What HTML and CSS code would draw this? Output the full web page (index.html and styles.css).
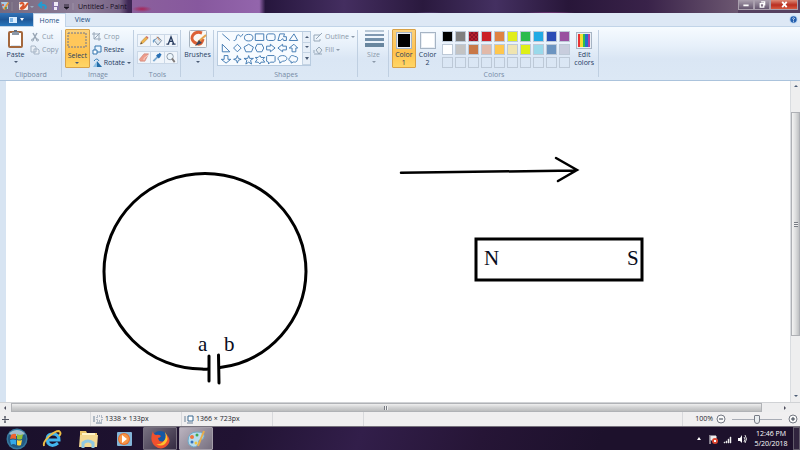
FILE: index.html
```html
<!DOCTYPE html>
<html lang="en">
<head>
<meta charset="utf-8">
<title>Untitled - Paint</title>
<link rel="stylesheet" href="styles.css">
</head>
<body>
<header class="titlebar">
  <svg class="quick" viewBox="0 0 76 13" aria-hidden="true">
    <path d="M1 2h7v7H3z" fill="#a5c9e4"/><path d="M3 9L8 2l1 1-4 7z" fill="#e99837"/><circle cx="3" cy="5" r="1" fill="#d44b33"/><circle cx="6" cy="8" r="1" fill="#4d8e48"/>
    <path d="M12 2v9" stroke="#8b8292"/>
    <rect x="19" y="2" width="9" height="8" rx="1" fill="#f3eee8"/><path d="M20 4c3-3 5 1 2 3s0 3 3 0l3-4" fill="none" stroke="#d9562b" stroke-width="2"/>
    <path d="M30 6h4l-2 2z" fill="#99a9be"/>
    <path d="M39 5h5q3 1 1 4M42 2l-3 3 3 3" fill="none" stroke="#249bd0" stroke-width="2"/>
    <path d="M52 2h7v8h-7z" fill="#8370a4"/><path d="M54 2h4v4h-4zM54 7h3v3h-3z" fill="#eee9f6"/>
    <path d="M64 5h5M64 7h5l-2.500 2z" stroke="#18131e" stroke-width=".8" fill="#18131e"/><path d="M73 3v7" stroke="#9d92a6"/>
  </svg>
  <h1>Untitled - Paint</h1>
  <div class="glass" aria-hidden="true"></div>
  <div class="window-controls">
    <button aria-label="Minimize"><svg viewBox="0 0 16 10"><path d="M5 6h6" stroke="#fff" stroke-width="2"/></svg></button>
    <button aria-label="Restore"><svg viewBox="0 0 16 10"><path d="M6 4h4v4H6zM7 2h4v4" fill="none" stroke="#fff" stroke-width="1.500"/></svg></button>
    <button class="close" aria-label="Close"><svg viewBox="0 0 16 10"><path d="M6 2l5 6M11 2L6 8" stroke="#fff" stroke-width="2"/></svg></button>
  </div>
</header>
<nav class="tabs">
  <button class="file" aria-label="File menu"><svg viewBox="0 0 33 13"><rect x="9" y="4" width="8" height="6" fill="#d9edff"/><path d="M10 5h3v4h-3z" fill="#7eb5e5"/><path d="M20 5h4l-2 3z" fill="#fff"/></svg></button>
  <button class="tab active">Home</button>
  <button class="tab">View</button>
  <button class="help" aria-label="Help"><svg viewBox="0 0 10 10"><circle cx="5" cy="5" r="4.500" fill="#b9d5f2"/><circle cx="5" cy="5" r="3.500" fill="#245fae"/><path d="M4 4q1-2 2 0L5 5v1M5 7v1" fill="none" stroke="#fff"/></svg></button>
</nav>
<section class="ribbon" aria-label="Ribbon">
  <div class="group clipboard">
    <div class="tools">
      <button class="big">
        <svg viewBox="0 0 18 20"><rect x="2" y="3" width="13" height="15" rx="1" fill="#fff" stroke="#a4683d" stroke-width="2"/><path d="M5 3h7v3H5z" fill="#8c98a7"/><path d="M7 1h3v2H7z" fill="#626f82"/><path d="M4 16h9v1H4z" fill="#d9e4ef"/></svg>
        Paste<i class="drop"></i></button>
      <div class="stack">
        <button class="off"><svg viewBox="0 0 10 10"><path d="M3 1l4 7M7 1L3 8" stroke="#98a6b5" stroke-width="1.500"/><circle cx="2.500" cy="8" r="1" fill="none" stroke="#98a6b5"/><circle cx="7.500" cy="8" r="1" fill="none" stroke="#98a6b5"/></svg>Cut</button>
        <button class="off"><svg viewBox="0 0 10 10"><path d="M1 1h4l1 1v5H1zM4 4h4l1 1v4H4z" fill="#eaf0f7" stroke="#a5b4c5"/></svg>Copy</button>
      </div>
    </div>
    <h2>Clipboard</h2>
  </div>
  <div class="group image">
    <div class="tools">
      <button class="big selected">
        <svg class="wide" viewBox="0 0 20 20"><rect x="1" y="3" width="18" height="14" fill="#ffc75a" stroke="#6c7590" stroke-dasharray="2 1"/></svg>
        Select<i class="drop"></i></button>
      <div class="stack">
        <button class="off"><svg viewBox="0 0 10 10"><path d="M2 0v7h7M0 2h7v7M2 7l6-6" fill="none" stroke="#98a7b8"/></svg>Crop</button>
        <button><svg viewBox="0 0 10 10"><path d="M3 1h6v6H3z" fill="#e7f4ff" stroke="#3375ae"/><path d="M1 5h4v4H1z" fill="#fff" stroke="#3375ae"/></svg>Resize</button>
        <button><svg viewBox="0 0 10 10"><path d="M1 9h4V3z" fill="#8dbee3"/><path d="M5 3l5 6H5z" fill="#246da8"/><path d="M2 3q3-4 5 0" fill="none" stroke="#3980b9"/></svg>Rotate<i class="drop"></i></button>
      </div>
    </div>
    <h2>Image</h2>
  </div>
  <div class="group toolset">
    <div class="toolgrid">
      <button aria-label="Pencil"><svg viewBox="0 0 12 12"><path d="M2 10l1-3 5-5 2 2-5 5z" fill="#eeb44d" stroke="#ab7c3d" stroke-width=".5"/><path d="M2 10l1-2 1 1z" fill="#333"/><path d="M8 2l2 2 1-1-2-2z" fill="#d36a60"/></svg></button>
      <button aria-label="Fill with color"><svg viewBox="0 0 12 12"><path d="M3 6l4-4 4 4-4 5z" fill="#dfe9f1" stroke="#73899f"/><path d="M4 4Q0 5 2 9l2-4z" fill="#6b9fcb"/><path d="M6 2l3 4" stroke="#d47945"/></svg></button>
      <button aria-label="Text"><svg viewBox="0 0 12 12"><path d="M1 10h3M7 10h4M3 10l3-8 3 8M4 7h4" fill="none" stroke="#293d60" stroke-width="1.500"/></svg></button>
      <button aria-label="Eraser"><svg viewBox="0 0 12 12"><path d="M1 8l5-6h5L7 10H2z" fill="#ed9c8b" stroke="#c77c70" stroke-width=".6"/><path d="M6 9V7l5-4" fill="none" stroke="#fff" stroke-width=".6"/></svg></button>
      <button aria-label="Color picker"><svg viewBox="0 0 12 12"><path d="M2 10l5-5" stroke="#7caad1" stroke-width="2"/><path d="M6 3l3 3M8 4l2-2" stroke="#286fb4" stroke-width="3"/></svg></button>
      <button aria-label="Magnifier"><svg viewBox="0 0 12 12"><circle cx="5" cy="5" r="3.500" fill="#edf6fc" stroke="#8795a5"/><path d="M7 7l3 4" stroke="#807b7a" stroke-width="2"/></svg></button>
    </div>
    <h2>Tools</h2>
  </div>
  <div class="group brushes">
    <div class="tools"><button class="big">
      <svg viewBox="0 0 18 20"><rect x=".5" y="1.500" width="17" height="17" rx="1" fill="#faf9f5" stroke="#a6b2be"/><path d="M13 4C5 1 0 9 5 13s8 2 9-3" fill="none" stroke="#dc6135" stroke-width="3"/><path d="M9 13l8-7" stroke="#e5a24d" stroke-width="2"/><path d="M6 17l4-6 3 3z" fill="#3c465b"/></svg>
      Brushes<i class="drop"></i></button></div>
  </div>
  <div class="group shapes">
    <div class="tools">
      <div class="gallery">
        <svg class="shape-set" viewBox="0 0 84 35" role="img" aria-label="Shapes">
          <g fill="#f7fbff" stroke="#4179b1" stroke-width="1">
            <path d="M2 2l8 7" /><path d="M14 9c4 1 2-6 5-6s1 5 5-1" fill="none"/><ellipse cx="30" cy="6" rx="4.500" ry="3.500"/><path d="M37 2h9v7h-9z"/><rect x="49" y="2" width="9" height="7" rx="2"/><path d="M61 9l2-7h5l-1 3h3v4h-3l-1-2-2 2z"/><path d="M78 2l4 7h-9z"/>
            <path d="M2 13v8h8z"/><path d="M18 13l4 4-4 4-4-4z"/><path d="M30 13l5 3-2 5h-6l-2-5z"/><path d="M39 13h5l2 4-2 4h-5l-2-4z"/><path d="M49 15h4v-2l5 4-5 4v-2h-4z"/><path d="M70 15h-4v-2l-5 4 5 4v-2h4z"/><path d="M76 21v-4h-3l5-4 4 4h-2v4z"/>
            <path d="M4 25h4v4h3l-5 4-5-4h3z"/><path d="M18 25l1 3 3 1-3 1-1 3-1-3-3-1 3-1z"/><path d="M30 25l1 3h4l-3 2 1 4-3-2-3 2 1-4-3-2h4z"/><path d="M42 25l1 2h4l-2 2 2 3h-4l-1 2-2-2h-3l2-3-2-2h3z"/><path d="M50 25h7l1 1v5l-1 1h-4l-2 2v-2l-2-1v-5z"/><path d="M63 31c-4-3-1-6 3-6 6 0 6 6 0 6l-3 2z"/><path d="M75 31c-3 0-3-3-1-4 0-3 4-2 5-1 4 0 3 3 2 5-2 2-3 0-4 1l-2 1z"/>
          </g>
        </svg>
        <div class="gallery-arrows"><button aria-label="Previous shapes"><i class="up"></i></button><button aria-label="Next shapes"><i class="drop"></i></button><button aria-label="More shapes"><i class="drop more"></i></button></div>
      </div>
      <div class="stack">
        <button class="off"><svg viewBox="0 0 10 10"><path d="M1 3h6M1 3v6h6V7M3 7l6-6" fill="none" stroke="#96a7b8"/></svg>Outline<i class="drop"></i></button>
        <button class="off"><svg viewBox="0 0 10 10"><path d="M3 5l3-3 3 3-3 4z" fill="#e2e9ef" stroke="#96a7b8"/><path d="M1 9h8M1 5v3" stroke="#96a7b8"/></svg>Fill<i class="drop"></i></button>
      </div>
    </div>
    <h2>Shapes</h2>
  </div>
  <div class="group size">
    <div class="tools"><button class="big off"><svg class="wide" viewBox="0 0 20 20"><path d="M1 2h19" stroke="#7f98b1"/><path d="M1 6h19" stroke="#7f98b1" stroke-width="2"/><path d="M1 10.500h19" stroke="#7390aa" stroke-width="3"/><path d="M1 16h19" stroke="#68869f" stroke-width="4"/></svg>Size<i class="drop"></i></button></div>
  </div>
  <div class="group colors">
    <div class="tools">
      <button class="big color selected"><span class="chip black"></span><span>Color<br>1</span></button>
      <button class="big color"><span class="chip"></span><span>Color<br>2</span></button>
      <div class="palette">
        <button class="black" aria-label="Black"></button><button class="gray" aria-label="Gray"></button><button class="darkred" aria-label="Dark red"></button><button class="red" aria-label="Red"></button><button class="orange" aria-label="Orange"></button><button class="yellow" aria-label="Yellow"></button><button class="green" aria-label="Green"></button><button class="turquoise" aria-label="Turquoise"></button><button class="indigo" aria-label="Indigo"></button><button class="purple" aria-label="Purple"></button>
        <button class="white" aria-label="White"></button><button class="lightgray" aria-label="Light gray"></button><button class="brown" aria-label="Brown"></button><button class="rose" aria-label="Rose"></button><button class="gold" aria-label="Gold"></button><button class="cream" aria-label="Light yellow"></button><button class="lime" aria-label="Lime"></button><button class="aqua" aria-label="Light turquoise"></button><button class="bluegray" aria-label="Blue gray"></button><button class="lavender" aria-label="Lavender"></button>
        <button aria-label="Custom 1"></button><button aria-label="Custom 2"></button><button aria-label="Custom 3"></button><button aria-label="Custom 4"></button><button aria-label="Custom 5"></button><button aria-label="Custom 6"></button><button aria-label="Custom 7"></button><button aria-label="Custom 8"></button><button aria-label="Custom 9"></button><button aria-label="Custom 10"></button>
      </div>
      <button class="big color edit"><span class="chip rainbow"></span><span>Edit<br>colors</span></button>
    </div>
    <h2>Colors</h2>
  </div>
</section>
<main class="workspace">
  <svg class="drawing" viewBox="6 81 784 321" preserveAspectRatio="xMinYMin meet" role="img" aria-label="Coil with terminals a and b, bar magnet and arrow">
    <g fill="none" stroke="#000" stroke-width="3" stroke-linecap="round">
      <path d="M208 369Q205 369.500 202 369A98 97.500 0 0 1 104 271.500A101 98 0 0 1 306 271.500A98 98 0 0 1 220 367.500"/>
      <path d="M209 356v25M218.500 355l.5 28"/>
      <path d="M401 172.800L576 170.500M556 158l21 12-19 11" stroke-width="2.500"/>
      <path d="M476 239h166v41H476z" stroke-linecap="butt"/>
    </g>
    <g class="marks"><text x="198" y="351">a</text><text x="224" y="351">b</text><text x="484" y="265">N</text><text x="627" y="265">S</text></g>
  </svg>
  <div class="vscroll" aria-hidden="true"><i class="up"></i><div class="thumb"></div><i class="drop"></i></div>
</main>
<div class="hscroll" aria-hidden="true"><i class="left"></i><div class="thumb"></div><i class="right"></i></div>
<footer class="status">
  <div class="cell cursor"><svg viewBox="0 0 10 10"><path d="M5 2v7M2 5.500h7" stroke="#515461"/><path d="M4 3h2M4 8h2M3 5v1M8 5v1" stroke="#515461"/></svg></div>
  <div class="cell"><svg viewBox="0 0 10 10"><path d="M4 2h5v5H4z" fill="none" stroke="#70839b" stroke-dasharray="1 1"/><path d="M1 2v6M3 9h6" stroke="#6f8297"/></svg>1338 × 133px</div>
  <div class="cell"><svg viewBox="0 0 10 10"><path d="M4 2h5v5H4z" fill="#fff" stroke="#386991"/><path d="M1 2v6M3 9h6" stroke="#6f8297"/></svg>1366 × 723px</div>
  <div class="cell"></div>
  <div class="cell rest"></div>
  <div class="zoom">
    <label for="zoom">100%</label>
    <button aria-label="Zoom out"><svg viewBox="0 0 10 10"><circle cx="5" cy="5" r="4" fill="#fafafa" stroke="#747983"/><path d="M3 5h4" stroke="#343e4c"/></svg></button>
    <input id="zoom" type="range" min="0" max="100" value="50">
    <button aria-label="Zoom in"><svg viewBox="0 0 10 10"><circle cx="5" cy="5" r="4" fill="#fafafa" stroke="#747983"/><path d="M3 5h4M5 3v4" stroke="#343e4c"/></svg></button>
  </div>
</footer>
<nav class="taskbar">
  <button aria-label="Start"><svg viewBox="0 0 22 22"><circle cx="11" cy="11" r="10.500" fill="#37779d"/><circle cx="11" cy="11" r="9" fill="#235a83"/><path d="M3 6a10 10 0 0 1 16 0q-8 4-16 0" fill="#9fbdcd"/><path d="M5 7q3-2 5-1v5q-3-1-6 0z" fill="#ee632e"/><path d="M11 6q3 2 6 0l-1 5q-3 1-5 0z" fill="#91bf38"/><path d="M4 12q3-1 6 0v5q-3-2-5 0z" fill="#35a9e8"/><path d="M11 12q2 1 5 0l-1 5q-2 1-4 0z" fill="#ffd43b"/></svg></button>
  <button aria-label="Internet Explorer"><svg viewBox="0 0 22 22"><path d="M17 15q-6 5-10 0-3-9 5-9 6 0 6 6H8" fill="none" stroke="#43b6ee" stroke-width="3"/><path d="M3 18C1 13 13 3 18 3q3 2 0 5" fill="none" stroke="#edbd45" stroke-width="2"/></svg></button>
  <button aria-label="File Explorer"><svg viewBox="0 0 22 22"><path d="M3 3h6l1 2h10v14H3z" fill="#eac468"/><path d="M5 5h13v12H5z" fill="#fff4c7"/><path d="M3 7h18l-1 12H2z" fill="#f4d992"/><path d="M6 20v-5q5-4 10 0v5" fill="none" stroke="#8fc9e3" stroke-width="3"/></svg></button>
  <button aria-label="Media Player"><svg viewBox="0 0 22 22"><rect x="4" y="4" width="15" height="14" rx="1" fill="#84b5d8"/><circle cx="11" cy="11" r="6" fill="#e66b28"/><circle cx="11" cy="11" r="5" fill="#f79547"/><path d="M9 7l5 4-5 4z" fill="#fff"/></svg></button>
  <button class="running" aria-label="Firefox"><svg viewBox="0 0 22 22"><circle cx="11" cy="11" r="8" fill="#1658a3"/><path d="M4 3q0 3 3 4 3-1 5 1-1 2-3 2 1 5 6 3 4-3 1-8 6 5 4 10-4 7-11 5Q-1 15 4 3z" fill="#ef512e"/><path d="M16 4q5 7 0 12-4 3-9 0 4 1 7-2 4-4 2-10z" fill="#ffc12d"/></svg></button>
  <button class="running current" aria-label="Paint"><svg viewBox="0 0 22 22"><path d="M3 13Q3 4 12 4q8 0 7 5-1 3-4 3-2 0-1 3-3 6-8 3-3-1-3-5z" fill="#b7dced" stroke="#6eaac9"/><circle cx="7" cy="9" r="2" fill="#ee733c"/><circle cx="12" cy="7" r="1.500" fill="#40a951"/><circle cx="7" cy="14" r="1.500" fill="#3672bb"/><circle cx="11" cy="15" r="1.500" fill="#f0c43e"/><path d="M13 18L19 3" stroke="#e8ad4c" stroke-width="2"/></svg></button>
  <div class="tray">
    <svg class="tray-icons" viewBox="0 0 54 12" aria-hidden="true"><path d="M2 7l2-3 2 3z" fill="#fff"/><path d="M15 2v9M16 3h5v4h-5z" stroke="#eee" fill="#eee"/><circle cx="20" cy="8" r="3" fill="#dc4530"/><path d="M19 7l2 2M21 7l-2 2" stroke="#fff"/><path d="M29 9h1v1h-1zM31 8h1v2h-1zM33 6h1v4h-1zM35 4h1v6h-1z" fill="#fff" stroke="#ddd" stroke-width=".5"/><path d="M43 5h2l2-3v8l-2-2h-2z" fill="#fff"/><path d="M49 4q2 2 0 5M50 2q3 4 0 8" fill="none" stroke="#ddd"/></svg>
    <time datetime="2018-05-20T12:46">12:46 PM<br>5/20/2018</time>
    <button class="desktop" aria-label="Show desktop"></button>
  </div>
</nav>
</body>
</html>
```
FILE: styles.css
```css
* { box-sizing: border-box; }
body {
  margin: 0;
  height: 100vh;
  overflow: hidden;
  display: grid;
  grid-template-columns: minmax(0, 1fr);
  grid-template-rows: auto auto auto minmax(0, 1fr) auto auto auto;
  font: 7px/8px "Open Sans", "Noto Sans", sans-serif;
  color: #263c5f;
}
button {
  border: 0;
  padding: 0;
  margin: 0;
  background: none;
  font: inherit;
  color: inherit;
}
svg { display: block; flex: none; }
h1, h2 { margin: 0; font: inherit; }

/* arrows */
.drop, .up, .left, .right { display: block; width: 0; height: 0; border: 2px solid transparent; flex: none; }
.drop { border-top-color: #4b5b74; border-bottom: 0; }
.up { border-bottom-color: #4b5b74; border-top: 0; }
.left { border-right-color: #4b4b5a; border-left: 0; }
.right { border-left-color: #4b4b5a; border-right: 0; }

/* title bar */
.titlebar {
  height: 13px;
  display: flex;
  background: linear-gradient(90deg, #75697f, #8d7d98 10%, #776386 15%, #3f2855 16%, #3a2250 17%);
}
.quick { width: 76px; height: 13px; }
.titlebar h1 { color: #150d1d; line-height: 13px; padding-left: 2px; width: 56px; white-space: nowrap; }
.glass {
  flex: 1;
  background:
    radial-gradient(ellipse at 49% 100%, #705999 0, transparent 4%),
    radial-gradient(ellipse at 69% 100%, #a04c9b 0, transparent 5%),
    radial-gradient(ellipse 10px 3px at 10px 9px, #a82456, transparent),
    linear-gradient(90deg, #8b609c, #87589e 11%, #9365ac 21%, #26163d 22%, #442e60 35%, #2a193e 48%, #443061 60%, #281639 72%, #392249 85%, #6c5771);
}
.window-controls { display: flex; align-items: flex-start; padding-right: 2px; background: #55405f; }
.window-controls button { width: 16px; height: 10px; border: 1px solid #aaa0ae; border-top: 0; background: linear-gradient(#aaa0ae, #65566f); }
.window-controls .close { width: 28px; background: linear-gradient(#dc8b78, #b92e20 55%, #d55a40); }
.window-controls svg { width: 100%; height: 9px; }

/* ribbon tabs */
.tabs { height: 14px; display: flex; background: #dde8f5; border-bottom: 1px solid #c1d4e8; }
.tabs button { height: 13px; }
.file { width: 33px; background: linear-gradient(#3475b9, #1e5797 50%, #2877bd); }
.file svg { width: 33px; height: 13px; }
.tab { width: 33px; color: #234d7f; }
.tab.active { background: #f8fbff; border: 1px solid #c1d4e8; border-bottom: 0; margin-bottom: -1px; align-self: flex-start; }
.tabs .active { height: 14px; }
.help { margin-left: auto; padding: 2px; }
.help svg { width: 9px; height: 9px; }

/* ribbon */
.ribbon {
  height: 54px;
  display: flex;
  background: linear-gradient(#f6fbff, #e7f0fa 35%, #dae6f4 60%, #dce8f5);
  border-bottom: 1px solid #abc3dc;
}
.group { display: flex; flex-direction: column; justify-content: space-between; padding: 2px 3px 1px; position: relative; flex: none; }
.group::after { content: ""; position: absolute; right: 0; top: 3px; bottom: 3px; width: 1px; background: #bfcfe1; }
.group h2 { color: #778ba5; text-align: center; line-height: 9px; }
.tools { display: flex; gap: 2px; }
.clipboard { width: 62px; }
.image { width: 72px; }
.toolset { width: 47px; }
.brushes { width: 33px; }
.shapes { width: 144px; }
.size { width: 31px; }
.colors { width: 210px; }
.big { width: 25px; height: 39px; display: flex; flex-direction: column; align-items: center; gap: 2px; }
.big svg { width: 18px; height: 20px; }
.big svg.wide { width: 20px; }
.big.selected { background: linear-gradient(#fbd17a, #ffc24d 60%, #ffd666); border: 1px solid #d8a147; border-radius: 1px; }
.brushes .tools, .size .tools { justify-content: center; }
.off { color: #8b99aa; }
.off .drop { border-top-color: #8b99aa; }
.stack { display: flex; flex-direction: column; gap: 3px; padding-top: 3px; }
.stack button { height: 10px; display: flex; align-items: center; gap: 2px; white-space: nowrap; }
.stack svg { width: 10px; height: 10px; }
.toolgrid { display: grid; grid-template-columns: repeat(3, 1fr); row-gap: 4px; padding-top: 5px; }
.toolgrid button { height: 13px; border: 1px solid #cbd8e7; border-left-width: 0; background: #f0f5fb; display: grid; place-items: center; }
.toolgrid button:nth-child(3n + 1) { border-left-width: 1px; }
.toolgrid svg { width: 12px; height: 11px; }
.gallery { display: flex; height: 35px; margin-top: 2px; border: 1px solid #b8cbdf; background: #f7fbff; }
.shape-set { width: 84px; height: 33px; }
.gallery-arrows { width: 8px; display: grid; border-left: 1px solid #c4d3e3; background: #e7eff8; }
.gallery-arrows button { display: grid; place-items: center; border-bottom: 1px solid #c4d3e3; }
.gallery-arrows .more { border-top-width: 3px; }
.shapes .tools { gap: 2px; }
.colors .tools { gap: 0; }
.color { gap: 2px; padding-top: 3px; }
.color.selected { padding-top: 2px; }
.chip { width: 16px; height: 17px; flex: none; border: 1px solid #a6b4c4; outline: 1px solid #e9eef4; outline-offset: -2px; background: #fff; }
.chip.rainbow { background: linear-gradient(90deg, #e83333 20%, #f5df32 20% 40%, #2ebd53 40% 60%, #256ecf 60% 80%, #b83e9f 80%); }
.black, .chip.black { background: #000; }
.palette { display: grid; grid-template-columns: repeat(10, 11px); grid-auto-rows: 11px; gap: 2px; padding: 2px 2px 0 3px; }
.palette button { border: 1px solid #bdc9d7; }
.gray { background: #7f7f7f; }
.darkred { background: repeating-conic-gradient(#8e1227 0 25%, #b3202d 0 50%) 0 0 / 4px 4px; }
.red { background: #cb2128; }
.orange { background: #df8343; }
.yellow { background: #e1ed19; }
.green { background: #2cbb4c; }
.turquoise { background: #21aae4; }
.indigo { background: #2b4db5; }
.purple { background: #9951a0; }
.white { background: #fff; }
.lightgray { background: #c3c3c3; }
.brown { background: #c87848; }
.rose { background: #e2b9a9; }
.gold { background: #ffc74e; }
.cream { background: #efe4b0; }
.lime { background: #deef18; }
.aqua { background: #99d9ea; }
.bluegray { background: #6b94c0; }
.lavender { background: #c8cddd; }

/* canvas */
.workspace { display: flex; min-height: 0; background: #fff; border-left: 6px solid #d7e4f2; }
.drawing { flex: 1; min-width: 0; height: 100%; }
.marks { font: 21px "Liberation Serif", serif; fill: #080c20; }
.vscroll { width: 10px; padding: 4px 0; display: grid; grid-template-rows: 3px minmax(0, 1fr) 3px; justify-items: center; background: #eeeeef; border-left: 1px solid #d9dce0; }
.vscroll .thumb { width: 9px; height: 73%; margin-top: 24px; border: 1px solid #aeb0b5; background: linear-gradient(90deg, #f3f3f3, #dddedf 50%, #bfc1c3); display: grid; place-items: center; }
.vscroll .thumb::after, .hscroll .thumb::after { content: ""; width: 4px; height: 5px; background: repeating-linear-gradient(#777b83 0 1px, #eee 1px 2px); }
.hscroll { height: 10px; display: flex; align-items: center; justify-content: space-between; padding: 0 14px 0 4px; background: #eeeeef; border-top: 1px solid #d0d2d5; }
.hscroll .thumb { width: 96%; height: 9px; margin-right: auto; margin-left: 5px; border: 1px solid #b0b2b6; background: linear-gradient(#eee, #d1d2d3 50%, #bbbcbd); display: grid; place-items: center; }
.hscroll .thumb::after { height: 4px; background: repeating-linear-gradient(90deg, #777b83 0 1px, #eee 1px 2px); }

/* status bar */
.status { height: 14px; display: flex; background: #f0eff0; color: #22242c; }
.cell { width: 91px; display: flex; align-items: center; gap: 2px; padding-left: 2px; border-right: 1px solid #d8d9dc; }
.cell svg { width: 10px; height: 10px; }
.cell.cursor { padding-left: 0; }
.cell.rest { flex: 1; }
.zoom { width: 117px; display: flex; align-items: center; justify-content: flex-end; gap: 3px; padding-right: 2px; }
.zoom svg { width: 10px; height: 10px; }
.zoom input { appearance: none; width: 56px; height: 10px; margin: 0; background: linear-gradient(#a8acb5, #a8acb5) center / 50px 1px no-repeat; }
.zoom input::-webkit-slider-thumb { appearance: none; width: 6px; height: 9px; border: 1px solid #777c86; border-radius: 1px 1px 3px 3px; background: #e9edf0; }

/* taskbar */
.taskbar { height: 24px; display: flex; align-items: stretch; gap: 2px; border-top: 1px solid #77727d; background: linear-gradient(110deg, #1a102b, #211333 30%, #321e4a 45%, #261536 60%, #1d112c 75%); }
.taskbar > button { width: 34px; display: grid; place-items: center; }
.taskbar > button:first-child { width: 33px; }
.taskbar > button svg { width: 22px; height: 22px; }
.taskbar .running { border: 1px solid #77707f; border-radius: 1px; background: linear-gradient(135deg, #777080, #352b42); }
.taskbar .current { background: linear-gradient(135deg, #bab3bf, #777080); border-color: #a49ea9; }
.taskbar .running svg { margin: -1px 0; }
.tray { margin-left: auto; display: flex; align-items: center; gap: 3px; color: #fff; }
.tray-icons { width: 54px; height: 12px; }
.tray time { width: 38px; line-height: 10px; text-align: center; white-space: nowrap; }
.desktop { align-self: stretch; width: 7px; border: 1px solid #615b6a; background: #30243e; }
```
